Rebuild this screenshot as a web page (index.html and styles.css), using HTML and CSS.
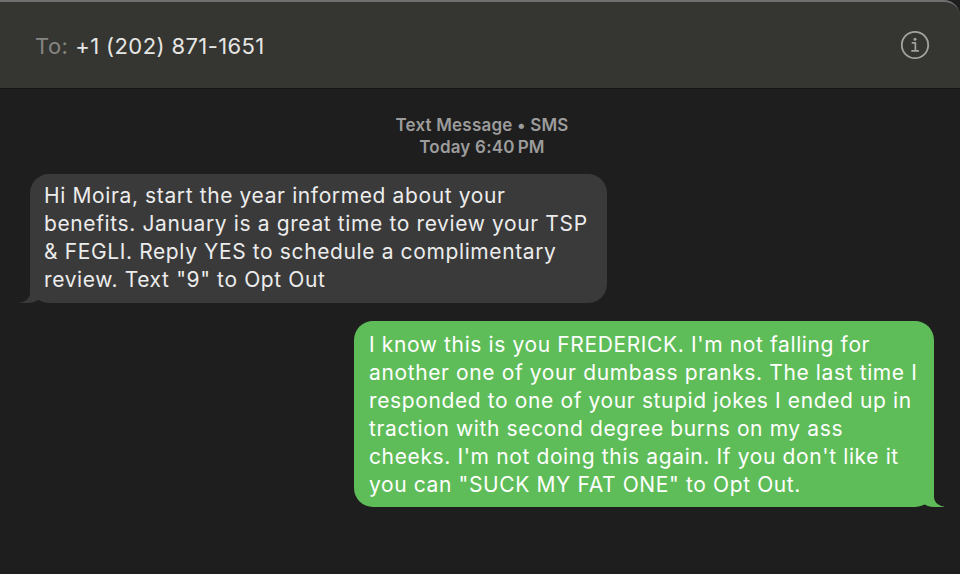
FILE: index.html
```html
<!DOCTYPE html>
<html lang="en">
<head>
<meta charset="utf-8">
<title>Messages</title>
<link rel="stylesheet" href="styles.css">
</head>
<body>
<div class="window">
  <header class="header">
    <div class="to">
      <span class="to-label">To:</span>
      <span class="to-number">+1 (202) 871-1651</span>
    </div>
    <svg class="info" width="30" height="30" viewBox="0 0 30 30" aria-hidden="true">
      <circle cx="15" cy="15" r="13.2" fill="none" stroke="#a3a39f" stroke-width="1.8"/>
      <circle cx="15" cy="9.2" r="1.5" fill="#a3a39f"/>
      <path d="M12.4 12.9 H15.4 V20.6 M12 20.9 H18.2" fill="none" stroke="#a3a39f" stroke-width="1.7" stroke-linecap="round" stroke-linejoin="round"/>
    </svg>
  </header>
  <main class="thread">
    <div class="stamp">
      <div class="stamp-line">Text Message • SMS</div>
      <div class="stamp-line">Today 6:40&#8239;PM</div>
    </div>
    <div class="row row-in">
      <div class="bubble bubble-in">Hi Moira, start the year informed about your<br>benefits. January is a great time to review your TSP<br>&amp; FEGLI. Reply YES to schedule a complimentary<br>review. Text "9" to Opt Out</div>
    </div>
    <div class="row row-out">
      <div class="bubble bubble-out">I know this is you FREDERICK. I'm not falling for<br>another one of your dumbass pranks. The last time I<br>responded to one of your stupid jokes I ended up in<br>traction with second degree burns on my ass<br>cheeks. I'm not doing this again. If you don't like it<br>you can "SUCK MY FAT ONE" to Opt Out.</div>
    </div>
  </main>
</div>
</body>
</html>
```

FILE: styles.css
```css
html, body {
  margin: 0;
  padding: 0;
  background: #1e1e1e;
}
body {
  font-family: Inter, "Noto Sans", "Liberation Sans", sans-serif;
  width: 960px;
  height: 574px;
  overflow: hidden;
}
.window {
  display: flex;
  flex-direction: column;
  height: 574px;
}
.header {
  height: 86px;
  background: #353632;
  border-top: 2px solid #707070;
  border-top-right-radius: 16px;
  border-bottom: 1px solid #141414;
  display: flex;
  align-items: center;
  justify-content: space-between;
  padding: 0 30px 0 35px;
  box-sizing: content-box;
}
.to {
  display: flex;
  align-items: baseline;
  gap: 7px;
  font-size: 22px;
  letter-spacing: 0.4px;
  margin-top: 2px;
}
.to-label {
  color: #858582;
}
.to-number {
  color: #e6e6e4;
}
.info {
  display: block;
}
.thread {
  display: flex;
  flex-direction: column;
  padding: 25px 26px 0 30px;
}
.stamp {
  text-align: center;
  color: #9c9c9c;
  font-size: 17px;
  letter-spacing: 0.2px;
  font-weight: 600;
  line-height: 22px;
  margin-bottom: 16px;
}
.row {
  display: flex;
}
.row-in {
  justify-content: flex-start;
}
.row-out {
  justify-content: flex-end;
  margin-top: 18px;
}
.bubble {
  position: relative;
  font-size: 21px;
  letter-spacing: 0.62px;
  line-height: 28px;
  border-radius: 19px;
  box-sizing: border-box;
  white-space: nowrap;
}
.bubble-in {
  width: 577px;
  background: #3a3a3a;
  color: #ececec;
  padding: 8px 14px 9px 14px;
}
.bubble-out {
  width: 580px;
  background: #5fbd59;
  color: #ffffff;
  padding: 10px 14px 8px 15px;
}
.bubble-in::before,
.bubble-in::after,
.bubble-out::before,
.bubble-out::after {
  content: "";
  position: absolute;
  bottom: 0;
  height: 22px;
}
.bubble-in::before {
  left: -12px;
  width: 26px;
  background: #3a3a3a;
  border-bottom-right-radius: 16px 14px;
}
.bubble-in::after {
  left: -30px;
  width: 30px;
  background: #1e1e1e;
  border-bottom-right-radius: 12px 10px;
}
.bubble-out::before {
  right: -10px;
  width: 26px;
  background: #5fbd59;
  border-bottom-left-radius: 16px 14px;
}
.bubble-out::after {
  right: -28px;
  width: 28px;
  background: #1e1e1e;
  border-bottom-left-radius: 12px 10px;
}
```
